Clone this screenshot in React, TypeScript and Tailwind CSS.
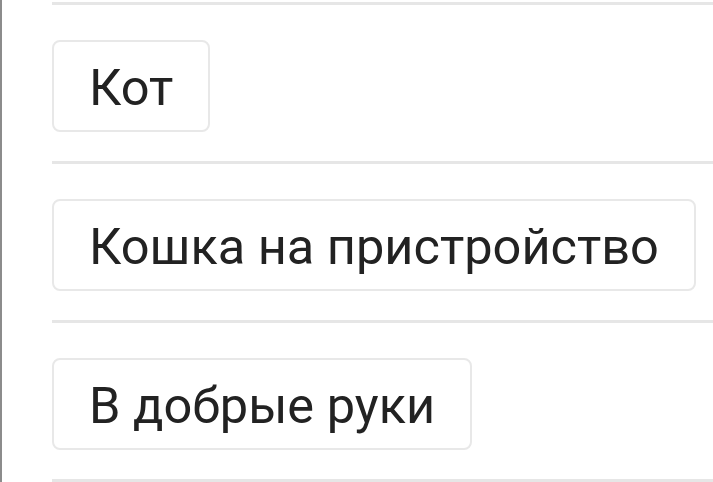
const tags = ['Кот', 'Кошка на пристройство', 'В добрые руки'];

export default function App() {
  return (
    <div className="h-[482px] w-[713px] overflow-hidden bg-white border-l-2 border-[#8c8c8c] font-['Roboto',sans-serif]">
      <div className="ml-[50px] pt-[2px]">
        {tags.map((tag) => (
          <div key={tag} className="border-t-[3px] border-[#e6e6e6] pt-[35px] pb-[29px]">
            <div className="inline-flex h-[92px] items-center rounded-[8px] border-2 border-[#e8e8e8] px-[35px] pt-[4px] text-[50.5px] leading-none text-[#222]">
              {tag}
            </div>
          </div>
        ))}
        <div className="border-t-[3px] border-[#e6e6e6]" />
      </div>
    </div>
  );
}
